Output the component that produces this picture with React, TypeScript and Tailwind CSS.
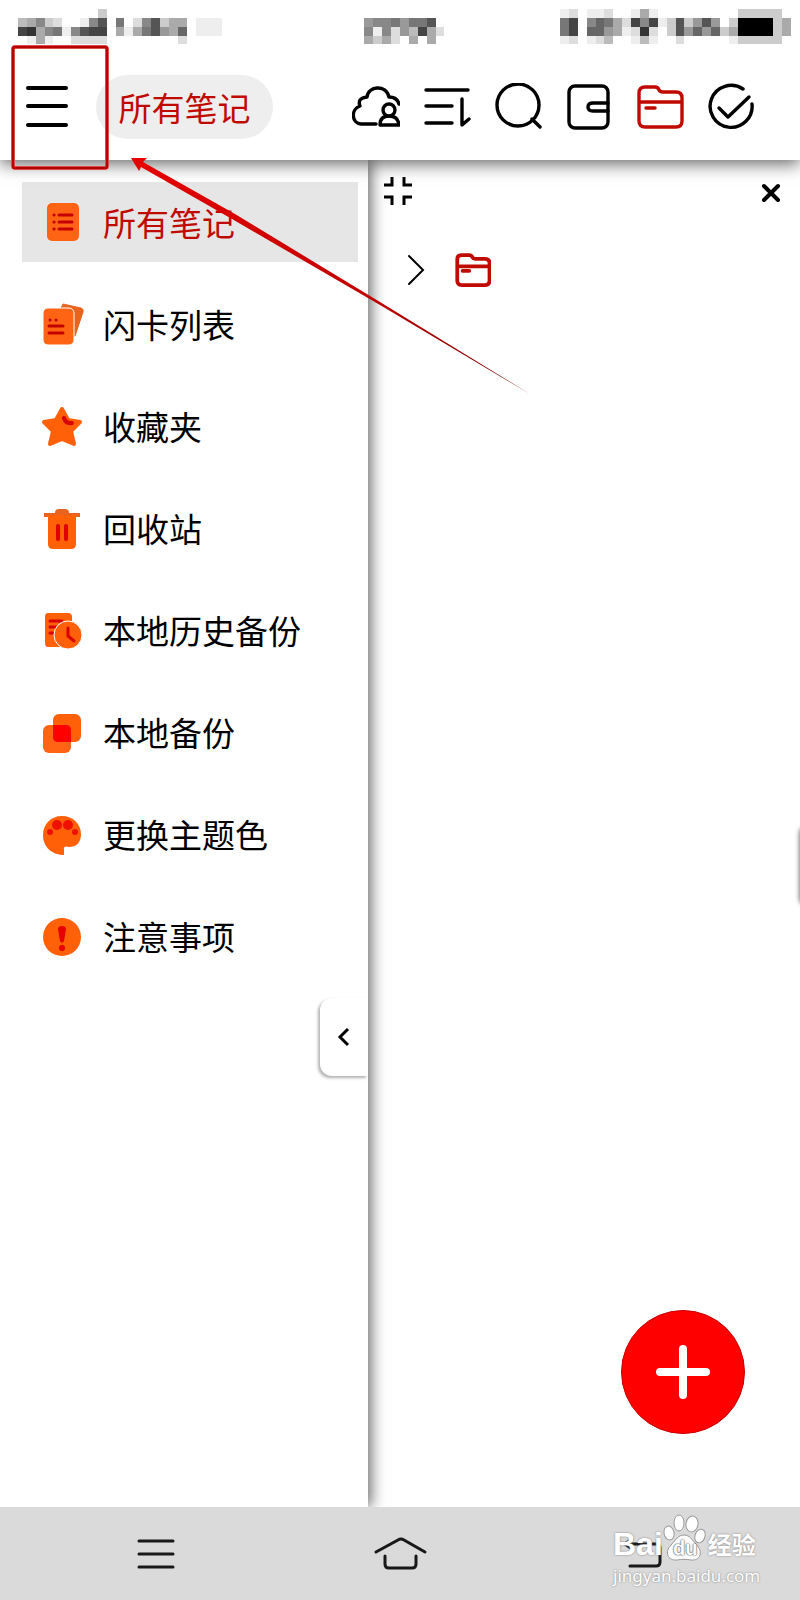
import type { ReactNode } from "react";

const RED = "#c00a00";

// One character per mosaic cell: a hex digit is a grey level, a dot is empty.
const statusRows: [number, string][][] = [
  [[11, "c"], [63, "ed.eed..eae"], [83, "ccccc"]],
  [[2, "ba8cdffe85f7fd85caafeee"], [41, "98879775"], [63, "74.867ad484ec5c959.c0000ca"]],
  [[2, "43a87e8544faea759a6feee"], [41, "8e8d9b4ad"], [63, "74.669aed3d.c59696ca0000ca"]],
  [[3, "eae..dddd......f.d"], [41, "acadfafa"], [63, "ed.edb..ebe..d.....eccccc"]],
];

type MenuItem = {
  label: string;
  icon: ReactNode;
  active?: boolean;
};

const menuItems: MenuItem[] = [
  {
    label: "所有笔记",
    active: true,
    icon: (
      <>
        <rect x="5" y="1" width="32" height="38" rx="5" fill="#ff6414" />
        <g stroke="#c40000" strokeWidth="3" strokeLinecap="round">
          <path d="M12 13h.1M17 13h13M12 20h.1M17 20h13M12 27h.1M17 27h13" />
        </g>
      </>
    ),
  },
  {
    label: "闪卡列表",
    icon: (
      <>
        <path d="M21 0l18 4q3 1 2 4l-8 24h-5V4h-9z" fill="#e8641e" stroke="#e8641e" strokeLinejoin="round" />
        <rect x="1" y="4" width="31" height="37" rx="5" fill="#ff6414" stroke="#fff" strokeWidth="1" />
        <g stroke="#c40000" strokeWidth="3" strokeLinecap="round">
          <path d="M8 16h.1M14 16h.1M7 22h14M7 29h14" />
        </g>
      </>
    ),
  },
  {
    label: "收藏夹",
    icon: (
      <>
        <path
          d="M20 3l6 11 12 2-9 9 3 13-12-5-12 5 3-13-9-9 12-2z"
          fill="#ff6008"
          stroke="#ff6008"
          strokeWidth="4"
          strokeLinejoin="round"
        />
        <path d="M22 12q2 6 8 5" fill="none" stroke="#d80000" strokeWidth="4" strokeLinecap="round" />
      </>
    ),
  },
  {
    label: "回收站",
    icon: (
      <>
        <path d="M13 5q0-4 4-4h6q4 0 4 4h11v4H2V5z" fill="#e8641e" />
        <path d="M6 7h28v29q0 5-5 5H11q-5 0-5-5z" fill="#ff6008" />
        <path d="M16 18v13M24 18v13" stroke="#e00000" strokeWidth="4" strokeLinecap="round" />
      </>
    ),
  },
  {
    label: "本地历史备份",
    icon: (
      <>
        <path d="M6 3h20q4 0 4 4v26q0 4-4 4H6q-3 0-3-4V7q0-4 3-4z" fill="#ff6008" />
        <path d="M8 11h12M8 17h6M8 23h3" stroke="#d80000" strokeWidth="3" strokeLinecap="round" />
        <circle cx="26" cy="25" r="14" fill="#ff6008" stroke="#fff" />
        <path d="M26 18v8l6 5" fill="none" stroke="#d80000" strokeWidth="3" strokeLinecap="round" />
      </>
    ),
  },
  {
    label: "本地备份",
    icon: (
      <>
        <rect x="11" y="2" width="28" height="28" rx="6" fill="#ff6008" />
        <rect x="1" y="13" width="28" height="28" rx="6" fill="#ff6414" />
        <path d="M11 13h13q5 0 5 5v12H16q-5 0-5-5z" fill="#ff0000" />
      </>
    ),
  },
  {
    label: "更换主题色",
    icon: (
      <>
        <path
          d="M20 2C31 2 39 10 39 20c0 9-5 13-12 13q-6-2-5 3v5C9 41 1 32 1 21S9 2 20 2z"
          fill="#ff6008"
        />
        <g fill="#f01000">
          <circle cx="15" cy="11" r="5" />
          <circle cx="26" cy="11" r="5" />
          <circle cx="8" cy="18" r="3" />
          <circle cx="33" cy="18" r="3" />
        </g>
      </>
    ),
  },
  {
    label: "注意事项",
    icon: (
      <>
        <circle cx="20" cy="21" r="19" fill="#ff6008" />
        <path d="M16 13q0-3 4-3t4 3l-2 12q-2 3-4 0z" fill="#e80000" />
        <circle cx="20" cy="32" r="3" fill="#e80000" />
      </>
    ),
  },
];

const toolbar: { label: string; color?: string; icon: ReactNode }[] = [
  {
    label: "云同步",
    icon: (
      <>
        <path d="M24 41H9C-1 40-1 26 8 23q-3-8 7-9c1-11 19-13 22 0q8 0 10 7" />
        <circle cx="37" cy="27" r="6" />
        <path d="M28 42q0-9 9-9t10 9z" />
      </>
    ),
  },
  {
    label: "排序",
    icon: <path d="M3 7h42M3 23h26M3 40h26M39 16v26l7-6" />,
  },
  {
    label: "搜索",
    icon: (
      <>
        <circle cx="24" cy="22" r="21" />
        <path d="M38 36l8 8" />
      </>
    ),
  },
  {
    label: "钱包",
    icon: (
      <>
        <rect x="4" y="3" width="39" height="42" rx="6" />
        <path d="M43 20H28q-5 0-5 4t5 4h15" />
      </>
    ),
  },
  {
    label: "文件夹",
    color: RED,
    icon: <FolderPaths />,
  },
  {
    label: "完成",
    icon: (
      <>
        <path d="M36 6A21 21 0 1 0 45 21" />
        <path d="M12 25l9 9 21-20" />
      </>
    ),
  },
];

function FolderPaths() {
  return (
    <>
      <path d="M3 19V10q0-6 6-6h10q3 0 4 3 1 2 4 2h13q6 0 6 6v23q0 6-6 6H9q-6 0-6-6zM3 19h43" />
      <path d="M10 25h9" />
    </>
  );
}

function StatusBar() {
  return (
    <div className="relative z-20 h-[54px] shrink-0 bg-white">
      <svg viewBox="0 0 90 5" className="block w-full" shapeRendering="crispEdges" aria-hidden="true">
        {statusRows.map((row, y) =>
          row.map(([start, cells]) =>
            cells.split("").map((cell, i) =>
              cell === "." ? null : (
                <rect key={`${y}-${start + i}`} x={start + i} y={y + 1} width="1" height="1" fill={`#${cell}${cell}${cell}`} />
              ),
            ),
          ),
        )}
      </svg>
    </div>
  );
}

function Header() {
  return (
    <header className="relative z-10 flex h-[106px] shrink-0 items-center bg-white pr-[45px] pl-6 shadow-[0_4px_16px_rgba(0,0,0,0.6)]">
      <button type="button" aria-label="菜单" className="h-12 w-12">
        <svg viewBox="0 0 48 48" fill="none" stroke="#000" strokeWidth="4" strokeLinecap="round">
          <path d="M4 5h38M4 23h38M4 42h38" />
        </svg>
      </button>
      <button
        type="button"
        className="ml-6 flex h-16 w-[177px] shrink-0 items-center justify-center rounded-full bg-[#eeeeee] text-[33px] leading-10 text-[#c00a00]"
      >
        所有笔记
      </button>
      <div className="ml-auto flex gap-[23px]">
        {toolbar.map((tool) => (
          <button key={tool.label} type="button" aria-label={tool.label} className="h-12 w-12">
            <svg
              viewBox="0 0 48 48"
              fill="none"
              stroke={tool.color ?? "#000"}
              strokeWidth="3.4"
              strokeLinecap="round"
              strokeLinejoin="round"
            >
              {tool.icon}
            </svg>
          </button>
        ))}
      </div>
    </header>
  );
}

function Sidebar() {
  return (
    <aside className="relative z-[5] w-[46%] shrink-0 bg-white pt-[22px] pr-[10px] pl-[22px] shadow-[3px_0_14px_rgba(0,0,0,0.6)]">
      <nav className="flex flex-col gap-[22px]">
        {menuItems.map((item) => (
          <a
            key={item.label}
            href="#"
            className={`flex h-20 items-center gap-[21px] pl-5 text-[33px] leading-10 ${
              item.active ? "bg-[#e6e6e6] text-[#c00a00]" : "text-black"
            }`}
          >
            <svg viewBox="0 0 40 40" className="h-10 w-10 shrink-0 overflow-visible" aria-hidden="true">
              {item.icon}
            </svg>
            {item.label}
          </a>
        ))}
      </nav>
      <button
        type="button"
        aria-label="收起"
        className="absolute top-[838px] right-0 flex h-[78px] w-12 items-center justify-center rounded-l-xl bg-white shadow-[-2px_2px_3px_rgba(0,0,0,0.3)]"
      >
        <svg viewBox="0 0 20 20" className="h-5 w-5" fill="none" stroke="#000" strokeWidth="3">
          <path d="M14 2L6 10l8 8" />
        </svg>
      </button>
    </aside>
  );
}

function NotesPanel() {
  return (
    <main className="relative min-w-0 flex-1 overflow-hidden bg-white">
      <div className="flex items-center justify-between pt-4 pr-[19px] pl-4">
        <button type="button" aria-label="缩小" className="h-8 w-7">
          <svg viewBox="0 0 28 32" fill="none" stroke="#000" strokeWidth="3">
            <path d="M0 9h8V1M28 9h-8V1M0 21h8v8M28 21h-8v8" />
          </svg>
        </button>
        <button type="button" aria-label="关闭" className="h-5 w-5">
          <svg viewBox="0 0 20 20" fill="none" stroke="#000" strokeWidth="4" strokeLinecap="round">
            <path d="M3 4l14 14M17 4L3 18" />
          </svg>
        </button>
      </div>
      <div className="mt-11 flex items-center gap-7 pl-[39px]">
        <button type="button" aria-label="展开" className="h-9 w-5">
          <svg viewBox="0 0 20 36" fill="none" stroke="#000" strokeWidth="2" strokeLinecap="round">
            <path d="M2 4l14 14L2 32" />
          </svg>
        </button>
        <svg
          viewBox="0 0 48 48"
          className="h-9 w-9"
          fill="none"
          stroke={RED}
          strokeWidth="5"
          strokeLinecap="round"
          strokeLinejoin="round"
          aria-hidden="true"
        >
          <FolderPaths />
        </svg>
      </div>
      <div className="absolute top-[666px] -right-2 h-20 w-2 rounded-l-lg shadow-[-1px_0_4px_rgba(0,0,0,0.5)]" />
      <button
        type="button"
        aria-label="新建"
        className="absolute right-[55px] bottom-[73px] h-[124px] w-[124px] rounded-full border border-[#c80000] bg-[#ff0000] p-[34px]"
      >
        <svg viewBox="0 0 54 54" fill="none" stroke="#fff" strokeWidth="8" strokeLinecap="round">
          <path d="M27 4v46M4 27h46" />
        </svg>
      </button>
    </main>
  );
}

function Watermark() {
  return (
    <div className="absolute right-11 bottom-3 w-[143px] text-white [text-shadow:0_0_2px_#777]">
      <div className="flex h-12 items-end">
        <span className="font-['Liberation_Sans'] text-[32px] leading-10 font-bold">Bai</span>
        <span className="relative flex h-12 w-[45px] shrink-0 items-end justify-center">
          <svg
            viewBox="0 0 44 48"
            className="absolute inset-0 h-12 w-11 overflow-visible"
            fill="#fff"
            stroke="#999"
            strokeWidth="1"
            aria-hidden="true"
          >
            <ellipse cx="6" cy="17" rx="5" ry="7" transform="rotate(-12 6 17)" />
            <ellipse cx="16" cy="7" rx="5" ry="8" />
            <ellipse cx="29" cy="8" rx="6" ry="8" transform="rotate(10 29 8)" />
            <ellipse cx="37" cy="20" rx="5" ry="7" transform="rotate(20 37 20)" />
            <path d="M21 19c6 0 8 5 12 9 8 8 4 17-5 16-6-1-8-1-14 0-9 1-13-8-6-15 5-5 7-10 13-10z" />
          </svg>
          <span className="relative font-['Liberation_Sans'] text-xl leading-8 font-bold [text-shadow:0_0_1px_#333,0_0_2px_#555]">du</span>
        </span>
        <span className="text-2xl leading-10 font-bold whitespace-nowrap">经验</span>
      </div>
      <div className="text-center font-['Noto_Sans'] text-[17px] leading-6 whitespace-nowrap">jingyan.baidu.com</div>
    </div>
  );
}

function SystemNav() {
  return (
    <footer className="relative z-10 grid h-[93px] shrink-0 grid-cols-3 items-center justify-items-center bg-[#dadada] px-[33px]">
      <button type="button" aria-label="任务" className="h-9 w-14">
        <svg viewBox="0 0 56 36" fill="none" stroke="#181818" strokeWidth="3" strokeLinecap="round">
          <path d="M12 5h34M12 18h34M12 31h34" />
        </svg>
      </button>
      <button type="button" aria-label="主页" className="h-9 w-14">
        <svg viewBox="0 0 56 36" fill="none" stroke="#181818" strokeWidth="3" strokeLinecap="round">
          <path d="M4 16L26 4q3-2 6 0l21 12M13 20v8q0 4 4 4h23q4 0 4-4v-8" />
        </svg>
      </button>
      <button type="button" aria-label="返回" className="h-9 w-14">
        <svg viewBox="0 0 56 36" fill="none" stroke="#181818" strokeWidth="3" strokeLinecap="round">
          <path d="M15 3l-7 5 7 5M9 8h30q4 0 4 4v14q0 4-4 4H13" />
        </svg>
      </button>
      <Watermark />
    </footer>
  );
}

// Tutorial callout drawn over the header and the first rows.
function Callout() {
  return (
    <div className="pointer-events-none absolute top-0 left-0 z-20">
      <svg viewBox="0 0 540 400" className="h-[400px] w-[540px]" aria-hidden="true">
        <defs>
          <linearGradient id="tail" x1="0" y1="0" x2="1" y2="1">
            <stop offset="0" stopColor="#e60000" />
            <stop offset="0.6" stopColor="#c00000" />
            <stop offset="1" stopColor="#700000" />
          </linearGradient>
        </defs>
        <rect x="13" y="47" width="94" height="121" rx="2" fill="none" stroke="#ff9a90" strokeWidth="4" />
        <rect x="13" y="47" width="94" height="121" rx="2" fill="none" stroke="#b80000" strokeWidth="3" />
        <path d="M131 158L147 158L143 162L235 214L380 302L530 394L380 305L232 219L141 167L139 171z" fill="url(#tail)" />
      </svg>
    </div>
  );
}

export default function App() {
  return (
    <div className="relative flex min-h-screen flex-col overflow-hidden bg-white font-['Noto_Sans_CJK_SC',sans-serif]">
      <StatusBar />
      <Header />
      <div className="flex flex-1">
        <Sidebar />
        <NotesPanel />
      </div>
      <SystemNav />
      <Callout />
    </div>
  );
}
